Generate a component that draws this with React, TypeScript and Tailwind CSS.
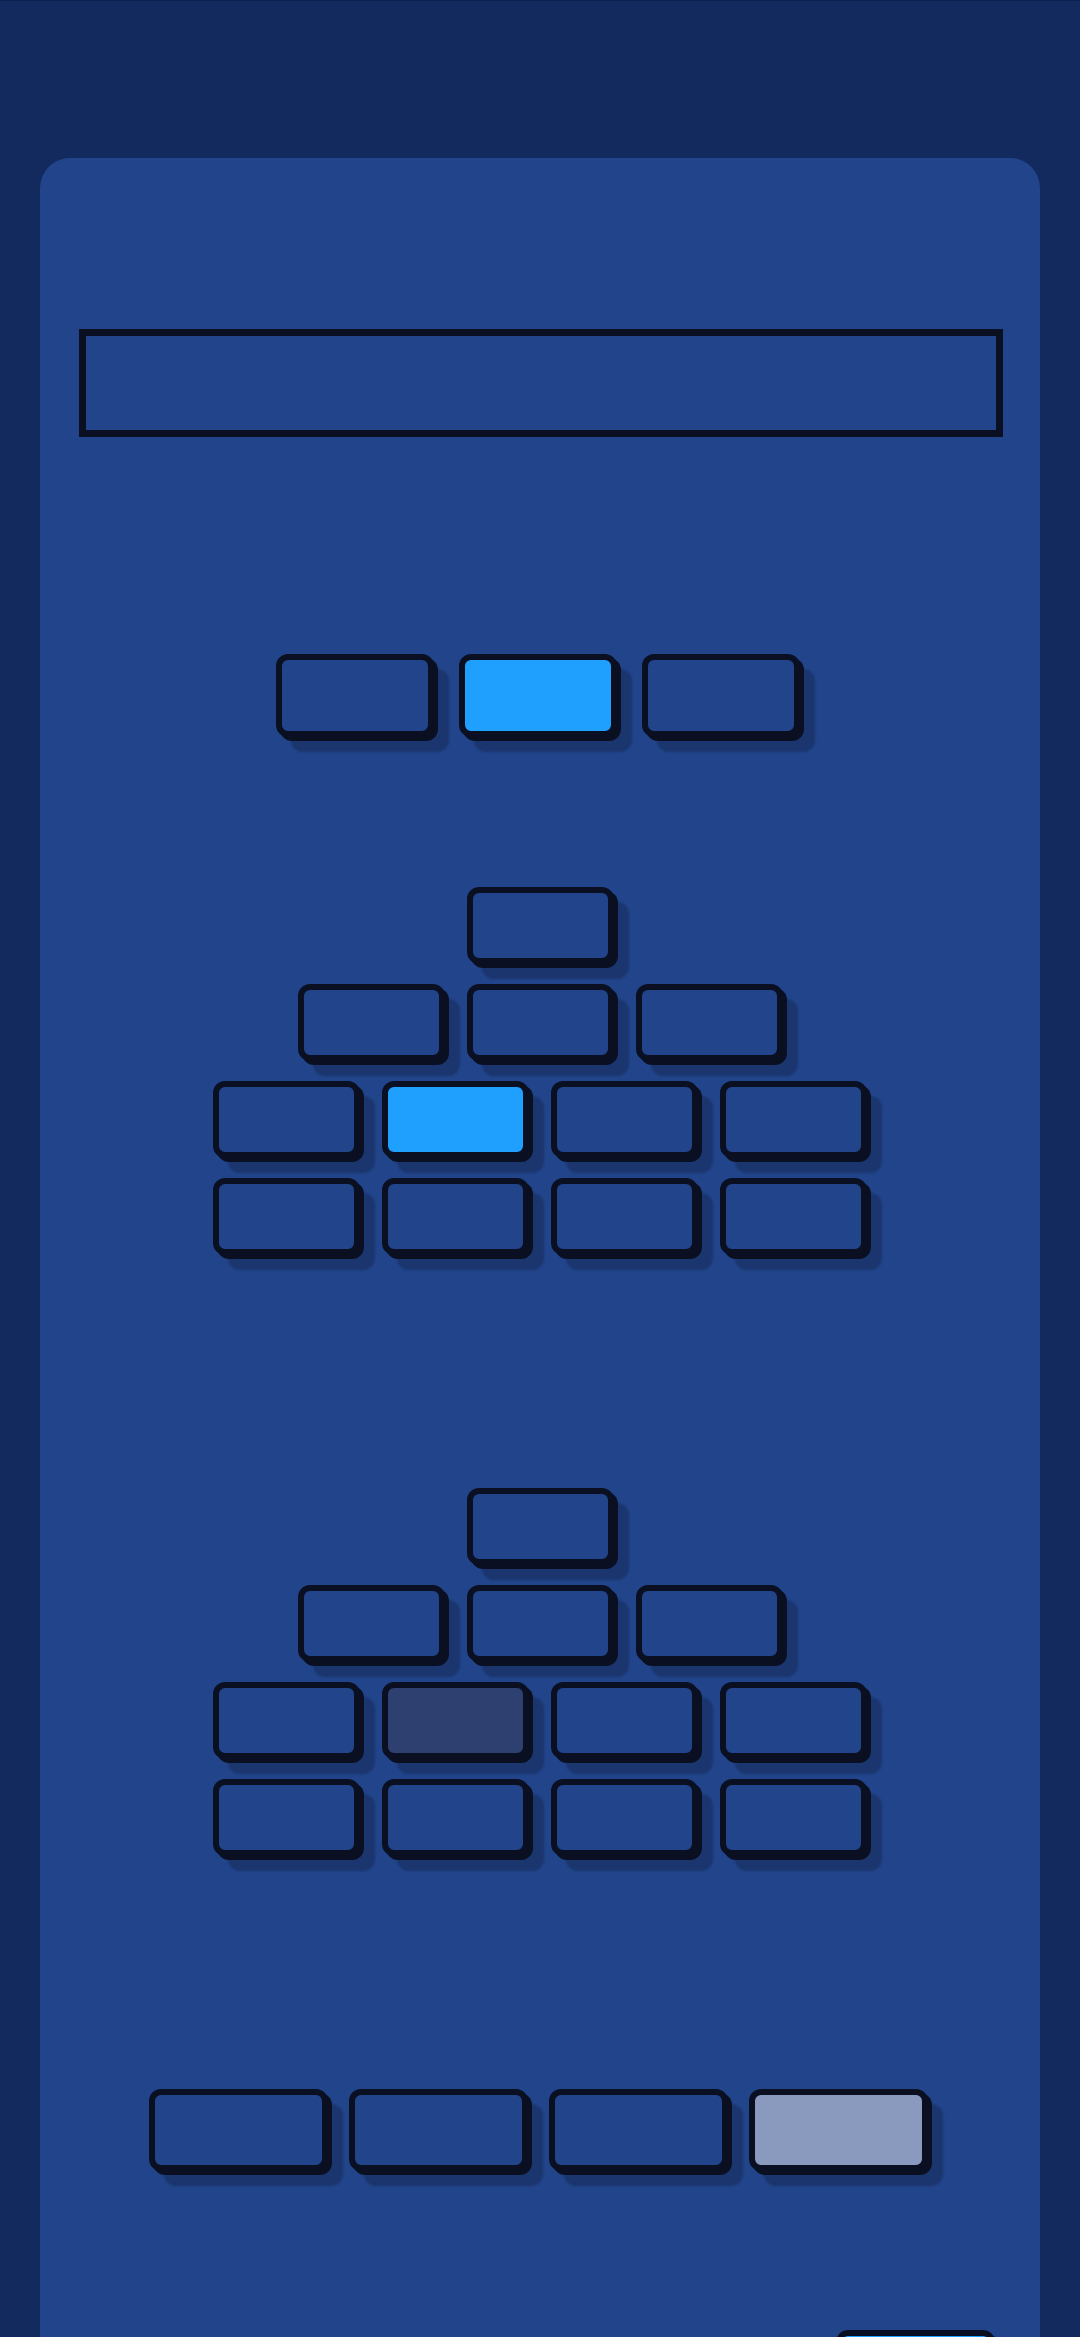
const keyBase =
  "rounded-[12px] border-[6px] border-[#0a1022] shadow-[4px_4px_0_0_#0a1022,15px_15px_2px_0_rgba(11,16,34,0.26)]";

type Tone = "idle" | "active" | "muted" | "light";

const toneClass: Record<Tone, string> = {
  idle: "bg-[#21448a]",
  active: "bg-[#1fa0ff]",
  muted: "bg-[#2e4070]",
  light: "bg-[#8a9abf]",
};

function Key({ tone = "idle", size }: { tone?: Tone; size: string }) {
  return <div className={`${keyBase} ${toneClass[tone]} ${size}`} />;
}

const PYRAMID = [1, 3, 4, 4];

function Pyramid({ highlight }: { highlight: Tone }) {
  return (
    <div className="flex flex-col items-center gap-[20px] pl-[6px]">
      {PYRAMID.map((count, row) => (
        <div key={row} className="flex justify-center gap-[22px]">
          {Array.from({ length: count }).map((_, i) => (
            <Key
              key={i}
              size="w-[147px] h-[77px]"
              tone={row === 2 && i === 1 ? highlight : "idle"}
            />
          ))}
        </div>
      ))}
    </div>
  );
}

export default function App() {
  return (
    <div className="h-[2337px] w-[1080px] overflow-hidden border-t border-[#0e2250] bg-[#132a5f] font-['Liberation_Sans',sans-serif]">
      <div className="mx-[40px] mt-[157px] min-h-[2300px] rounded-t-[30px] bg-[#21448a] pl-[39px] pr-[37px] pt-[171px]">
        <div className="h-[108px] border-[7px] border-[#0a1022] bg-[#21448a]" />

        {/* key groups sit a touch left of the card centre */}
        <div className="pr-[8px]">
          <div className="mt-[217px] flex justify-center gap-[25px] pl-[2px]">
            <Key size="w-[158px] h-[83px]" />
            <Key size="w-[158px] h-[83px]" tone="active" />
            <Key size="w-[158px] h-[83px]" />
          </div>

          <div className="mt-[150px]">
            <Pyramid highlight="active" />
          </div>

          <div className="mt-[233px]">
            <Pyramid highlight="muted" />
          </div>

          <div className="mt-[233px] flex justify-center gap-[21px] pl-[2px]">
            <Key size="w-[179px] h-[82px]" />
            <Key size="w-[179px] h-[82px]" />
            <Key size="w-[179px] h-[82px]" />
            <Key size="w-[179px] h-[82px]" tone="light" />
          </div>

          <div className="mt-[159px] flex justify-end">
            <Key size="w-[159px] h-[83px]" tone="active" />
          </div>
        </div>
      </div>
    </div>
  );
}
